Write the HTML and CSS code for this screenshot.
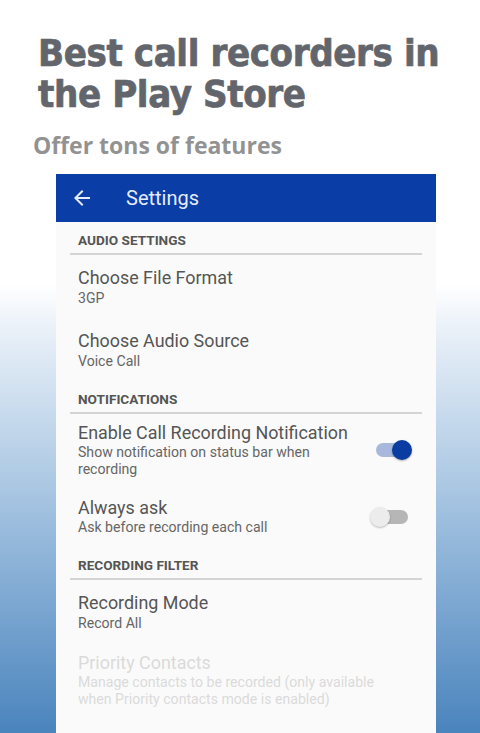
FILE: index.html
```html
<!DOCTYPE html>
<html>
<head>
<meta charset="utf-8">
<link rel="stylesheet" href="styles.css">
</head>
<body>
<div class="page">
  <header class="hero">
    <h1 class="hero-title">Best call recorders in<br>the Play Store</h1>
    <p class="hero-sub">Offer tons of features</p>
  </header>
  <div class="phone">
    <div class="appbar">
      <svg class="back" width="24" height="24" viewBox="0 0 24 24"><path d="M20 11H7.83l5.59-5.59L12 4l-8 8 8 8 1.41-1.41L7.83 13H20v-2z" fill="#e6ecff"/></svg>
      <span class="appbar-title">Settings</span>
    </div>
    <div class="cat">AUDIO SETTINGS</div>
    <div class="item">
      <div class="item-text">
        <div class="item-title">Choose File Format</div>
        <div class="item-sum">3GP</div>
      </div>
    </div>
    <div class="item">
      <div class="item-text">
        <div class="item-title">Choose Audio Source</div>
        <div class="item-sum">Voice Call</div>
      </div>
    </div>
    <div class="cat">NOTIFICATIONS</div>
    <div class="item item-switch">
      <div class="item-text">
        <div class="item-title">Enable Call Recording Notification</div>
        <div class="item-sum">Show notification on status bar when recording</div>
      </div>
      <div class="switch on"><span class="track"></span><span class="thumb"></span></div>
    </div>
    <div class="item item-switch">
      <div class="item-text">
        <div class="item-title">Always ask</div>
        <div class="item-sum">Ask before recording each call</div>
      </div>
      <div class="switch off"><span class="track"></span><span class="thumb"></span></div>
    </div>
    <div class="cat">RECORDING FILTER</div>
    <div class="item">
      <div class="item-text">
        <div class="item-title">Recording Mode</div>
        <div class="item-sum">Record All</div>
      </div>
    </div>
    <div class="item item-disabled">
      <div class="item-text">
        <div class="item-title">Priority Contacts</div>
        <div class="item-sum">Manage contacts to be recorded (only available when Priority contacts mode is enabled)</div>
      </div>
    </div>
  </div>
</div>
</body>
</html>
```
FILE: styles.css
```css
html, body {
  margin: 0;
  padding: 0;
}
body {
  width: 480px;
  height: 733px;
  overflow: hidden;
  background: linear-gradient(to bottom, #ffffff 0px, #ffffff 285px, #e9f0f8 330px, #b9d1e8 450px, #8db3d8 560px, #4a84bd 733px);
  font-family: Roboto, "Noto Sans", sans-serif;
}
.page {
  display: flex;
  flex-direction: column;
}
.hero {
  padding: 33px 0 0 38px;
}
.hero-title {
  margin: 0;
  font-family: "DejaVu Sans Condensed", "DejaVu Sans", sans-serif;
  font-weight: bold;
  font-size: 38px;
  line-height: 41px;
  color: #62666c;
  letter-spacing: -0.4px;
  white-space: nowrap;
  -webkit-text-stroke: 0.7px #62666c;
}
.hero-sub {
  margin: 17px 0 0 -5px;
  font-family: "Open Sans", sans-serif;
  font-weight: bold;
  font-size: 23px;
  line-height: 26px;
  color: #929292;
}
.phone {
  margin: 16px 0 0 56px;
  width: 380px;
  height: 560px;
  background: #fafafa;
}
.appbar {
  height: 48px;
  background: #0a3da6;
  display: flex;
  align-items: center;
}
.back {
  margin-left: 14px;
}
.appbar-title {
  margin-left: 32px;
  font-size: 20px;
  color: #e6ecff;
}
.cat {
  margin: 0 14px;
  padding: 10px 0 5px 8px;
  line-height: 16px;
  font-size: 13.6px;
  font-weight: bold;
  color: #555;
  border-bottom: 2px solid #d4d4d4;
}
.item {
  display: flex;
  align-items: center;
  padding: 12px 46px 11px 22px;
}
.item-switch {
  padding: 8px 24px 11px 22px;
}
.item-disabled {
  padding-top: 9px;
}
.item-text {
  flex: 1;
  min-width: 0;
}
.item-title {
  font-size: 17.9px;
  line-height: 22px;
  color: #555;
  white-space: nowrap;
}
.item-sum {
  font-size: 14.1px;
  line-height: 18px;
  color: #666;
}
.item-switch .item-sum {
  line-height: 17px;
  padding-right: 20px;
}
.item-disabled .item-title,
.item-disabled .item-sum {
  color: #dadada;
}
.item-disabled .item-sum {
  line-height: 17px;
}
.switch {
  position: relative;
  width: 42px;
  height: 20px;
  margin-left: 8px;
}
.track {
  position: absolute;
  left: 6px;
  top: 3px;
  width: 32px;
  height: 14px;
  border-radius: 7px;
}
.thumb {
  position: absolute;
  top: 0;
  width: 20px;
  height: 20px;
  border-radius: 50%;
}
.on .track { background: #a8b8dc; }
.on .thumb { right: 0; background: #0a3ca2; box-shadow: 0 1px 2px rgba(0,0,0,0.3); }
.off .track { background: #b6b6b6; }
.off .thumb { left: 0; background: #ececec; box-shadow: 0 1px 2px rgba(0,0,0,0.25); }
```
